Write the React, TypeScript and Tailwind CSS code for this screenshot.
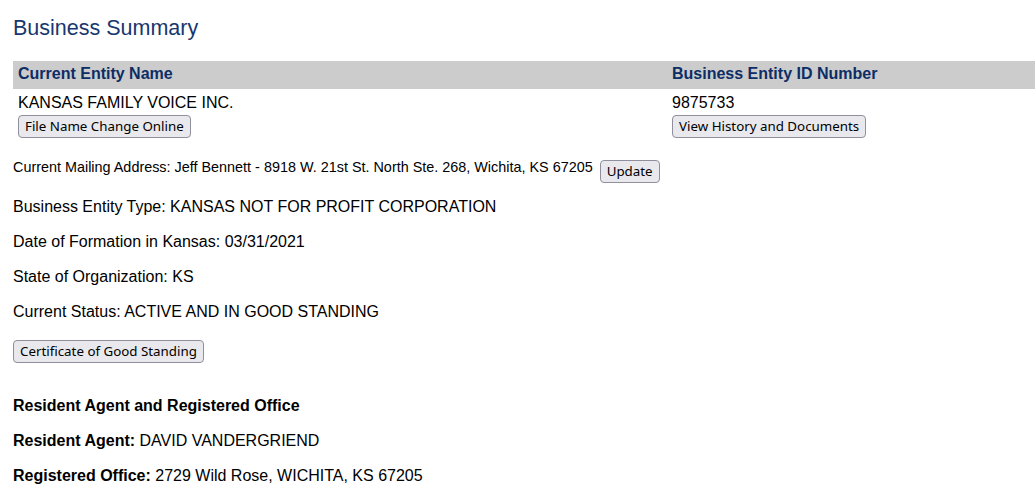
import React from "react";

const btn =
  "inline-flex items-center justify-center h-[23px] px-[6px] rounded-[4px] border border-[#8f8f9d] bg-[#e9e9ed] text-[13.33px] leading-none text-black font-['Noto_Sans',sans-serif] whitespace-nowrap";

export default function App() {
  return (
    <div className="bg-white min-h-[489px] w-[1035px] overflow-hidden px-[13px] text-black font-['Liberation_Sans',Arial,sans-serif]">
      <h2 className="mt-[15px] text-[21.5px] leading-[26px] text-[#17376f]">Business Summary</h2>

      <div className="mt-[20px] mr-[-13px]">
        <div className="flex h-[28px] items-center pb-[2px] bg-[#cccccc] text-[16px] font-bold text-[#0d2d66]">
          <div className="w-[654px] pl-[5px]">Current Entity Name</div>
          <div className="pl-[5px]">Business Entity ID Number</div>
        </div>
        <div className="flex pt-[5px] text-[16px]">
          <div className="w-[654px] pl-[5px] flex flex-col items-start">
            <div className="leading-[18px]">KANSAS FAMILY VOICE INC.</div>
            <button className={btn + " mt-[3px]"}>File Name Change Online</button>
          </div>
          <div className="pl-[5px] flex flex-col items-start">
            <div className="leading-[18px]">9875733</div>
            <button className={btn + " mt-[3px]"}>View History and Documents</button>
          </div>
        </div>
      </div>

      <div className="mt-[21px] flex items-start">
        <span className="text-[14.4px] leading-[16px] font-['Liberation_Sans_Narrow','Arial_Narrow',sans-serif]">
          Current Mailing Address: Jeff Bennett - 8918 W. 21st St. North Ste. 268, Wichita, KS 67205
        </span>
        <button className={btn + " ml-[7px] mt-[1px]"}>Update</button>
      </div>

      <p className="mt-[14px] text-[16px] leading-[19px]">Business Entity Type: KANSAS NOT FOR PROFIT CORPORATION</p>
      <p className="mt-[16px] text-[16px] leading-[19px]">Date of Formation in Kansas: 03/31/2021</p>
      <p className="mt-[16px] text-[16px] leading-[19px]">State of Organization: KS</p>
      <p className="mt-[16px] text-[16px] leading-[19px]">Current Status: ACTIVE AND IN GOOD STANDING</p>

      <button className={btn + " mt-[19px]"}>Certificate of Good Standing</button>

      <p className="mt-[33px] text-[16px] leading-[19px] font-bold">Resident Agent and Registered Office</p>
      <p className="mt-[16px] text-[16px] leading-[19px]">
        <span className="font-bold">Resident Agent:</span> DAVID VANDERGRIEND
      </p>
      <p className="mt-[16px] text-[16px] leading-[19px]">
        <span className="font-bold">Registered Office:</span> 2729 Wild Rose, WICHITA, KS 67205
      </p>
    </div>
  );
}
